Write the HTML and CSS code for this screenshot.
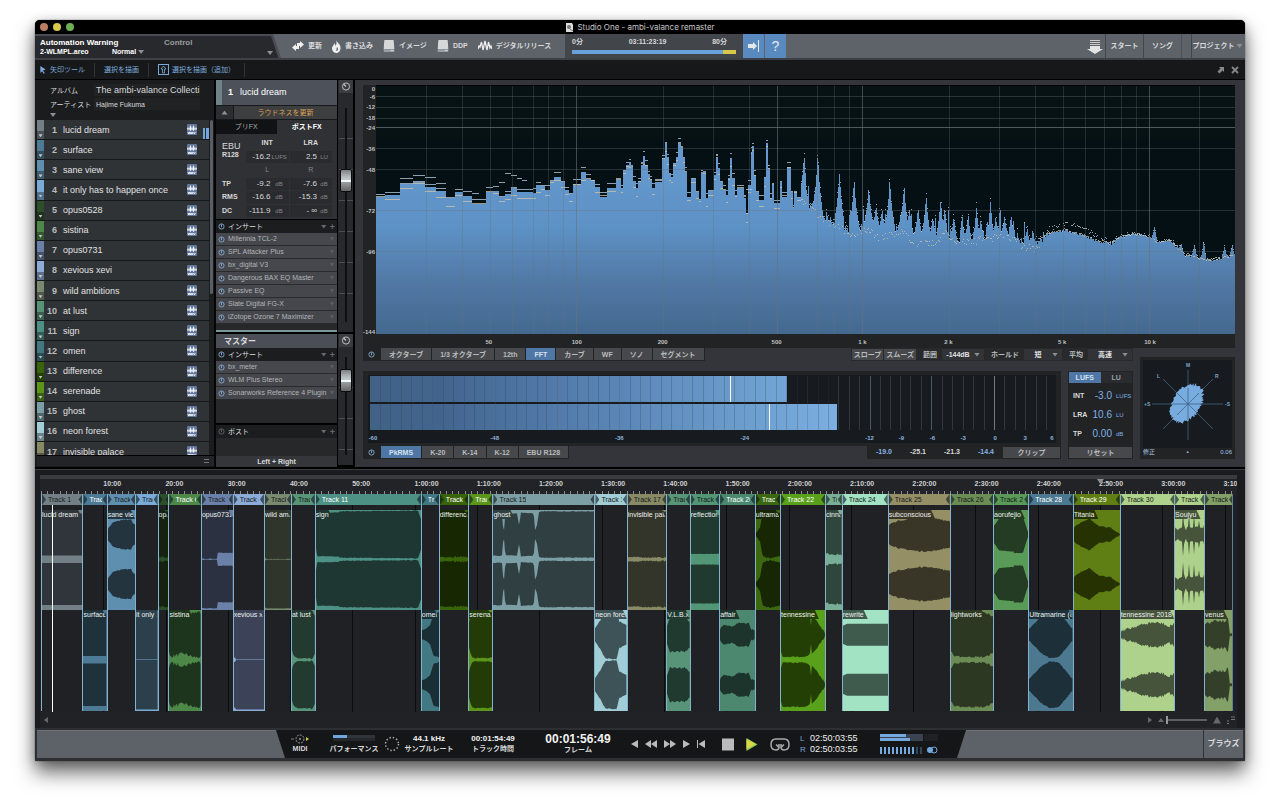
FILE: index.html
```html
<!DOCTYPE html>
<html lang="ja">
<head>
<meta charset="utf-8">
<title>Studio One - ambi-valance remaster</title>
<link rel="stylesheet" href="styles.css">
</head>
<body>
<svg class="defs" aria-hidden="true">
  <symbol id="power" viewBox="0 0 10 10"><circle cx="5" cy="5" r="3.7" fill="none" stroke="currentColor" stroke-width="1.3"/><path d="M5 2v4" stroke="currentColor" stroke-width="1.3"/></symbol>
  <symbol id="knob" viewBox="0 0 10 10"><circle cx="5" cy="5" r="4" fill="none" stroke="currentColor" stroke-width="1"/><path d="M5 5L2.500 2.500" stroke="currentColor" stroke-width="1.200"/></symbol>
  <symbol id="disk" viewBox="0 0 12 13"><path d="M1 0h10l1 10H0z" fill="#d5d7d8"/><path d="M0 10h12v3H0z" fill="#9a9da1"/><path d="M8 11h3v1H8z" fill="#eee"/></symbol>
  <symbol id="wav" viewBox="0 0 10 11"><rect width="10" height="11" rx="1" fill="#62779b"/><path d="M0 5l1-2 1 2 1.500-4L5 5l1.500-4L8 5l1-2 1 2-1 1-1-1-1.500 2L5 5 3.500 7 2 5 1 6z" fill="#f2f5fa"/><path d="M1 8l.7 2 .8-2 .7 2 .6-2M4.300 10L5 8l.8 2M6.500 8l.9 2 .9-2" fill="none" stroke="#fff" stroke-width=".8"/></symbol>
</svg>
<div class="window">
  <header class="titlebar">
    <span class="lights"><i></i><i></i><i></i></span>
    <svg class="doc-icon" viewBox="0 0 9 9"><path d="M1 0h6l1 2v7H1z" fill="#ddd"/><circle cx="4" cy="4" r="2" fill="#777"/><path d="M5 6l3 2" stroke="#777"/></svg>
    <span>Studio One - ambi-valance remaster</span>
  </header>

  <div class="toolbar">
    <div class="param-wrap"><div class="param">
      <div class="param-main"><b>Automation Warning</b><span><b>2-WLMPL.areo</b><b class="normal">Normal <i class="tri"></i></b></span></div>
      <div class="param-side"><span>Control</span><i class="tri"></i></div>
    </div></div>
    <nav class="actions">
      <button><svg class="i12" viewBox="0 0 12 12"><path d="M5 3h3V1l4 3.500L8 8V6H5z" fill="#eee"/><path d="M7 6H4V4L0 7.500 4 11V9h3z" fill="#eee"/></svg>更新</button>
      <button><svg class="flame" viewBox="0 0 9 13"><path d="M4 0c1 3 5 4 4.500 8.500C8 12 6 13 4.500 13 2 13 0 11 0 8.500 0 6 2 6 2 3c1 1 1.500 2 1.500 3C5 4 4.500 2 4 0z" fill="#eee"/><path d="M5 7c2 2 1 4-1 4 1-1 0-2 1-4z" fill="#667"/></svg>書き込み</button>
      <button><svg class="i12" viewBox="0 0 12 13"><use href="#disk"/></svg>イメージ</button>
      <button><svg class="i12" viewBox="0 0 12 13"><use href="#disk"/></svg>DDP</button>
      <button><svg class="i14" viewBox="0 0 14 12"><path d="M0 9l1-3 1 1L3.500 2l1.500 8L7 1l2 9 1.500-8L12 8l1-2 1 3" fill="none" stroke="#eee" stroke-width="1.300"/></svg>デジタルリリース</button>
    </nav>
    <div class="capacity">
      <div class="cap-text"><span>0分</span><span>03:11:23:19</span><span>80分</span></div>
      <div class="cap-bar"><i></i></div>
    </div>
    <button class="blue" aria-label="自動スクロール"><svg class="i12" viewBox="0 0 12 12"><path d="M0 4h5V2l4 4-4 4V8H0z" fill="#e6e8e8"/><path d="M10.500 0v12" stroke="#e6e8e8"/></svg></button>
    <button class="blue help" aria-label="ヘルプ">?</button>
    <nav class="pages">
      <svg class="down" viewBox="0 0 16 15"><path d="M3 1.500h10M3 3.500h10M3 5.500h10" stroke="#c9cbcc"/><path d="M3 7h10v3h3l-8 5-8-5h3z" fill="#e3e5e4"/></svg>
      <button>スタート</button><button>ソング</button><i class="spacer"></i><button class="project">プロジェクト<i class="tri"></i></button>
    </nav>
  </div>

  <div class="toolbar2">
    <button class="tool"><svg class="i8" viewBox="0 0 8 9"><path d="M1 0l6 4-3 1 2 3-1 1-2-3-2 2z" fill="#78a8d8"/></svg>矢印ツール</button>
    <button class="tool">選択を描画</button>
    <button class="tool"><svg class="i11" viewBox="0 0 11 11"><rect x=".5" y=".5" width="10" height="10" fill="none" stroke="#78a8d8"/><path d="M5.500 2L8 5H6.500v4h-2V5H3z" fill="none" stroke="#78a8d8" stroke-width=".8"/></svg>選択を描画（追加）</button>
    <span class="grow"></span>
    <button aria-label="切り離す"><svg class="i8" viewBox="0 0 8 8"><path d="M2 1h5v5L5.500 4.500 2.500 7.500.5 5.500l3-3z" fill="#888"/></svg></button>
    <button aria-label="閉じる"><svg class="i8" viewBox="0 0 8 8"><path d="M1 1l6 6M7 1L1 7" stroke="#888" stroke-width="1.800"/></svg></button>
  </div>

  <main class="main">
    <section class="album">
      <div class="meta">
        <label for="album">アルバム</label><input id="album" class="big" value="The ambi-valance Collecti">
        <label for="artist">アーティスト</label><input id="artist" value="Hajime Fukuma">
        <i class="tri"></i>
      </div>
      <div class="list-view"><ol class="tracks" id="tracks"></ol><i class="scroll"></i></div>
      <div class="list-foot"><i></i></div>
    </section>

    <section class="inspector">
      <div class="strip-top">
        <h2 class="song"><b>1</b>lucid dream</h2>
        <div class="update"><button aria-label="折りたたむ"><i class="tri up"></i></button><button class="update-btn">ラウドネスを更新</button></div>
        <div class="tabs"><button>プリFX</button><button class="on">ポストFX</button></div>
        <table class="loud">
          <tr><th rowspan="2" class="ebu">EBU<br><small>R128</small></th><th>INT</th><th>LRA</th></tr>
          <tr><td>-16.2<small>LUFS</small></td><td>2.5<small>LU</small></td></tr>
          <tr class="lr"><th></th><th>L</th><th>R</th></tr>
          <tr><th>TP</th><td>-9.2<small>dB</small></td><td>-7.6<small>dB</small></td></tr>
          <tr><th>RMS</th><td>-16.6<small>dB</small></td><td>-15.3<small>dB</small></td></tr>
          <tr><th>DC</th><td>-111.9<small>dB</small></td><td>- ∞<small>dB</small></td></tr>
        </table>
        <div class="ins-head"><svg class="pw"><use href="#power"/></svg>インサート<span class="grow"></span><i class="tri"></i><b>+</b></div>
        <ul class="fx">
          <li><svg class="pw"><use href="#power"/></svg>Millennia TCL-2<i class="tri"></i></li>
          <li><svg class="pw"><use href="#power"/></svg>SPL Attacker Plus<i class="tri"></i></li>
          <li><svg class="pw"><use href="#power"/></svg>bx_digital V3<i class="tri"></i></li>
          <li><svg class="pw"><use href="#power"/></svg>Dangerous BAX EQ Master<i class="tri"></i></li>
          <li><svg class="pw"><use href="#power"/></svg>Passive EQ<i class="tri"></i></li>
          <li><svg class="pw"><use href="#power"/></svg>Slate Digital FG-X<i class="tri"></i></li>
          <li><svg class="pw"><use href="#power"/></svg>iZotope Ozone 7 Maximizer<i class="tri"></i></li>
        </ul>
        <div class="colour-line"></div>
      </div>
      <div class="fader first"><svg class="kn"><use href="#knob"/></svg><div class="rail"><i class="cap"></i></div></div>

      <div class="strip-master">
        <h2 class="master">マスター</h2>
        <div class="ins-head"><svg class="pw"><use href="#power"/></svg>インサート<span class="grow"></span><i class="tri"></i><b>+</b></div>
        <ul class="fx">
          <li><svg class="pw"><use href="#power"/></svg>bx_meter<i class="tri"></i></li>
          <li><svg class="pw"><use href="#power"/></svg>WLM Plus Stereo<i class="tri"></i></li>
          <li><svg class="pw"><use href="#power"/></svg>Sonarworks Reference 4 Plugin<i class="tri"></i></li>
        </ul>
        <div class="empty"></div>
        <div class="ins-head post"><svg class="pw"><use href="#power"/></svg>ポスト<span class="grow"></span><i class="tri"></i><b>+</b></div>
        <div class="out">Left + Right</div>
      </div>
      <div class="fader second"><svg class="kn"><use href="#knob"/></svg><div class="rail"><i class="cap"></i></div></div>
    </section>

    <section class="analysis">
      <div class="spectrum">
        <div class="db-axis" id="dbAxis"></div>
        <svg class="plot" id="plot" viewBox="0 0 860 249" preserveAspectRatio="none"></svg>
        <div class="hz-axis" id="hzAxis"></div>
      </div>
      <div class="lower">
        <div class="lower-left">
          <div class="controls">
            <div class="bank"><svg class="pw"><use href="#power"/></svg><button>オクターブ</button><button>1/3 オクターブ</button><button>12th</button><button class="on">FFT</button><button>カーブ</button><button>WF</button><button>ソノ</button><button>セグメント</button></div>
            <span class="grow"></span>
            <div class="options">
              <button>スロープ</button><button>スムーズ</button>
              <label for="range">範囲</label><span class="sel w42"><select id="range"><option>-144dB</option></select><i class="tri"></i></span>
              <label for="hold">ホールド</label><span class="sel w38"><select id="hold"><option>短</option></select><i class="tri"></i></span>
              <label for="avg">平均</label><span class="sel w44"><select id="avg"><option>高速</option></select><i class="tri"></i></span>
            </div>
          </div>
          <div class="meters">
            <div class="level">
              <div class="level-view"><svg id="level" viewBox="0 0 690 56" preserveAspectRatio="none"></svg><div class="level-axis" id="levelAxis"></div></div>
              <div class="level-foot">
                <div class="bank low"><svg class="pw"><use href="#power"/></svg><button class="on">PkRMS</button><button>K-20</button><button>K-14</button><button>K-12</button><button>EBU R128</button></div>
                <span class="gap"></span>
                <div class="peaks"><b class="b">-19.0</b><b>-25.1</b><b>-21.3</b><b class="b">-14.4</b><button>クリップ</button></div>
              </div>
            </div>
            <div class="lufs">
              <div class="lufs-tabs"><button class="on">LUFS</button><button>LU</button></div>
              <dl><dt>INT</dt><dd>-3.0</dd><dd class="u">LUFS</dd><dt>LRA</dt><dd>10.6</dd><dd class="u">LU</dd><dt>TP</dt><dd>0.00</dd><dd class="u">dB</dd></dl>
              <button class="reset">リセット</button>
            </div>
          </div>
        </div>
        <div class="phase">
          <svg id="phase" viewBox="0 0 89 88"></svg>
          <div class="phase-foot"><span>修正</span><span>▪</span><span>0.06</span></div>
        </div>
      </div>
    </section>
  </main>

  <section class="arrange">
    <div class="arrange-inner">
      <div class="ruler-top"></div>
      <div class="ruler" id="ruler"></div>
      <div class="lanes" id="lanes"></div>
      <div class="scrollbar"><i class="tri left"></i><span class="grow"></span><i class="tri right"></i><i class="tri up"></i><input type="range" min="0" max="100" value="0" aria-label="ズーム"><i class="tri up large"></i><svg class="i8" viewBox="0 0 8 8"><path d="M4 1h4M4 3.500h4M0 5h2M0 7.500h2" stroke="#777"/></svg></div>
    </div>
  </section>

  <footer class="transport">
    <div class="deck-wrap"><div class="deck">
      <div class="cell midi"><svg class="midi-i" viewBox="0 0 18 10"><circle cx="9" cy="5" r="4" fill="none" stroke="#999" stroke-dasharray="2 1"/><circle cx="9" cy="5" r="1" fill="#999"/><path d="M0 5h3" stroke="#777"/><path d="M15 3l3 2-3 2z" fill="#d5c640"/></svg><span>MIDI</span></div>
      <div class="cell perf"><span class="perf-bar"><i></i></span><span>パフォーマンス</span></div>
      <svg class="ring" viewBox="0 0 16 16"><circle cx="8" cy="8" r="6.500" fill="none" stroke="#aaa" stroke-width="1.500" stroke-dasharray="1.500 1.900"/></svg>
      <div class="cell rate"><b>44.1 kHz</b><span>サンプルレート</span></div>
      <div class="cell time"><b>00:01:54:49</b><span>トラック時間</span></div>
      <div class="cell frame"><b>00:01:56:49</b><span>フレーム</span></div>
      <div class="buttons">
        <button aria-label="前へ"><svg class="n7" viewBox="0 0 7 8"><path d="M7 0v8L0 4z"/></svg></button>
        <button aria-label="巻き戻し"><svg class="n12" viewBox="0 0 12 8"><path d="M6 0v8L0 4zM12 0v8L6 4z"/></svg></button>
        <button aria-label="早送り"><svg class="n12" viewBox="0 0 12 8"><path d="M0 0v8l6-4zM6 0v8l6-4z"/></svg></button>
        <button aria-label="次へ"><svg class="n7" viewBox="0 0 7 8"><path d="M0 0v8l7-4z"/></svg></button>
        <button class="rtz" aria-label="先頭へ"><svg class="n8" viewBox="0 0 8 8"><path d="M0 0h1v8H0zM8 0v8L1.500 4z"/></svg></button>
        <button class="stop" aria-label="停止"><svg class="n12s" viewBox="0 0 12 12"><path d="M0 0h12v12H0z"/></svg></button>
        <button class="play" aria-label="再生"><svg class="n12s" viewBox="0 0 12 14"><path d="M0 0l12 7-12 7z" fill="#8fc65a"/><path d="M0 1l10 5.500L0 12z" fill="#d9d648"/></svg></button>
        <button aria-label="ループ"><svg class="n20" viewBox="0 0 20 13"><path d="M9 6V9q0 3-3 3Q1 12 1 6.500T6 1h8q5 0 5 5.500T14 12q-3 0-3-3V6M11.500 9L14 6.500M8.500 9L6 6.500" fill="none" stroke="#aaa" stroke-width="1.500"/></svg></button>
      </div>
      <div class="loc"><span><em>L</em>02:50:03:55</span><span><em>R</em>02:50:03:55</span></div>
      <svg class="out-meter" viewBox="0 0 58 20"><rect width="43" height="7" fill="#3b4350"/><rect width="26" height="3" fill="#73a9de"/><rect y="4" width="30" height="3" fill="#73a9de"/><rect x="44" width="14" height="7" fill="#1f2124"/><path d="M1 13v7M5 13v7M9 13v7M13 13v7M17 13v7M21 13v7M25 13v7M29 13v7M33 13v7" stroke="#73a9de" stroke-width="2"/><path d="M37 13v7M41 13v7" stroke="#33475c" stroke-width="2"/><circle cx="50" cy="16" r="3" fill="#73a9de"/><circle cx="54" cy="16" r="3" fill="none" stroke="#73a9de"/></svg>
    </div></div>
    <span class="grow"></span>
    <button class="browse">ブラウズ</button>
  </footer>
</div>
<script src="app.js"></script>
</body>
</html>
```
FILE: styles.css
```css
* { box-sizing: border-box; }
body {
  margin: 0;
  padding: 20px 35px 50px;
  background: #fff;
  font: 7px/10px "Liberation Sans", "Noto Sans CJK JP", sans-serif;
  color: #d8d9da;
}
button, input, select { font: inherit; color: inherit; background: none; border: 0; padding: 0; margin: 0; border-radius: 0; }
button { white-space: nowrap; }
svg { display: block; flex: none; }
h2, ul, ol, dl, dd { margin: 0; padding: 0; list-style: none; font-weight: normal; }
i { font-style: normal; }
.defs { position: absolute; width: 0; height: 0; }
.grow { flex: 1; }
.tri { display: inline-block; flex: none; width: 6px; height: 4px; background: #8d8f92; clip-path: polygon(0 0, 100% 0, 50% 100%); }
.tri.up { clip-path: polygon(50% 0, 100% 100%, 0 100%); }
.tri.left { width: 4px; height: 6px; clip-path: polygon(100% 0, 100% 100%, 0 50%); }
.tri.right { width: 4px; height: 6px; clip-path: polygon(0 0, 100% 50%, 0 100%); }
.i8 { width: 8px; height: 8px; }
.i11 { width: 11px; height: 11px; }
.i12 { width: 12px; height: 12px; }
.i14 { width: 14px; height: 12px; }

.window { background: #101113; border-radius: 5px 5px 1px 1px; overflow: clip; box-shadow: 0 0 1px #000, 0 12px 20px rgba(0,0,0,.55), 0 3px 12px rgba(0,0,0,.25); }
.titlebar { display: grid; grid-template-columns: 1fr auto auto 1fr; gap: 3px; align-items: center; height: 14px; background: #000; font: 8px/14px Inter, "Liberation Sans", sans-serif; color: #c6c6c6; }
.doc-icon { width: 9px; height: 9px; }
.lights { display: flex; gap: 5px; padding-left: 5px; }
.lights i { width: 8px; height: 8px; border-radius: 50%; background: #b97d62; }
.lights i:nth-child(2) { background: #d9c94f; }
.lights i:nth-child(3) { background: #6eae52; }

.toolbar { display: flex; height: 26px; background: #5e6269; border-bottom: 2px solid #3d4147; }
.param-wrap { background: #494c52; clip-path: polygon(0 0, 238px 0, 100% 100%, 0 100%); }
.param { display: flex; justify-content: space-between; width: 246px; height: 24px; padding: 2px 4px 0 5px; margin-top: 2px; background: #27292c; clip-path: polygon(0 0, 236px 0, 244px 100%, 0 100%); }
.param-main { display: flex; flex-direction: column; width: 124px; font-size: 8px; line-height: 9px; color: #fff; }
.param-main span { display: flex; font-size: 7px; justify-content: space-between; }
.normal { width: 52px; }
.param-side { display: flex; flex: 1; justify-content: space-between; padding-right: 4px; font-size: 8px; line-height: 9px; color: #9b9da0; font-weight: bold; }
.param-side .tri { align-self: flex-end; margin: 0 0 5px; }
.actions { display: flex; flex: none; align-items: center; gap: 10px; width: 284px; padding-left: 11px; }
.actions button { display: flex; align-items: center; gap: 4px; font-weight: bold; }
.flame { width: 9px; height: 13px; }
.capacity { flex: 0 0 178px; padding: 3px 7px 0; background: #42454a; font-weight: bold; }
.cap-text { display: flex; justify-content: space-between; padding-right: 9px; }
.cap-bar { height: 4px; margin-top: 3px; background: linear-gradient(90deg, #68a1db 92%, #d7c84a 92%); }
.blue { display: grid; place-items: center; flex: 0 0 21px; margin-right: 1px; background: #588ac0; }
.help { font: 14px/20px "Liberation Sans", sans-serif; color: #e5e8ea; }
.pages { display: flex; flex: 1; justify-content: flex-end; align-items: center; font-weight: bold; }
.pages button { align-self: stretch; width: 38px; border-left: 1px solid #43464b; }
.pages .spacer { align-self: stretch; width: 10px; border-left: 1px solid #4b4e54; }
.pages .project { width: 54px; padding-right: 2px; }
.project .tri { margin-left: 2px; }
.down { width: 16px; height: 15px; margin-right: 2px; }

.toolbar2 { display: flex; align-items: center; height: 20px; padding: 0 6px 0 3px; background: #17181a; border-bottom: 1px solid #000; color: #7bacdc; }
.tool { display: flex; align-items: center; gap: 3px; height: 14px; padding: 0 9px; border-right: 1px solid #313335; }
.tool:first-child { padding-left: 1px; }
.toolbar2 .grow + button { margin-right: 6px; }

.main { display: grid; grid-template-columns: 181px 138px minmax(0, 1fr); min-height: 386px; border-bottom: 2px solid #000; background: #0b0c0d; }

.album { display: flex; flex-direction: column; padding-left: 2px; background: #1b1c1e; border-right: 2px solid #050505; }
.meta { display: grid; grid-template-columns: 44px 106px; column-gap: 0; row-gap: 1px; height: 40px; padding: 4px 0 0 13px; align-content: start; }
.meta label { height: 13px; line-height: 13px; color: #ddd; }
.meta input { width: 100%; height: 12px; background: #202224; font-size: 7px; padding-left: 2px; }
.meta .big { font-size: 9px; }
.meta .tri { height: 4px; margin-top: 1px; }
.list-view { display: flex; flex: none; height: 335px; overflow: hidden; }
.tracks { flex: 1; height: 342px; display: flex; flex-direction: column; }
.tracks li { flex: 1; display: grid; grid-template-columns: 7px 14px 1fr 12px 10px; align-items: center; background: #303336; border-bottom: 1px solid #17181a; font-size: 9px; color: #e0e1e2; }
.tracks b { text-align: right; padding-right: 1px; color: #b9bbbd; }
.tracks span { padding-left: 5px; white-space: nowrap; }
.chip { display: flex; align-self: stretch; align-items: flex-end; justify-content: center; padding-bottom: 2px; background-image: linear-gradient(transparent 60%, rgba(0,0,0,.35) 60%); }
.chip .tri { width: 4px; height: 3px; background: #c5c8c9; }
.wav { width: 10px; height: 11px; }
.play-meter { align-self: end; justify-self: end; width: 6px; height: 11px; background: linear-gradient(90deg, #70a6dd 40%, #26292c 40% 55%, #70a6dd 55%); }
.scroll { width: 3px; height: 174px; margin: 0 1px; background: #5a5d64; border-radius: 2px; }
.list-foot { display: flex; justify-content: flex-end; align-items: center; height: 11px; padding-right: 5px; border-top: 1px solid #000; background: #222427; }
.list-foot i { width: 5px; height: 4px; border: solid #777; border-width: 1px 0; }

.inspector { display: grid; grid-template-columns: 121px 16px; grid-template-rows: auto 1fr; column-gap: 0; background: #000; align-content: start; }
.strip-top { background: #26282a; border-bottom: 2px solid #000; }
.song { display: flex; height: 25px; line-height: 25px; gap: 7px; padding-left: 6px; border-left: 6px solid #6f8388; background: #4d515a; font-size: 9px; color: #fff; }
.update { display: grid; grid-template-columns: 17px 1fr; gap: 1px; height: 15px; padding: 1px 0; background: #17181a; }
.update button { background: #2c2e31; display: grid; place-items: center; }
.update .update-btn { background: #3c3e40; color: #dca052; }
.tabs { display: grid; grid-template-columns: 1fr 1fr; height: 14px; }
.tabs button { background: #111214; color: #a6a8aa; font-size: 7px; }
.tabs .on { background: #2f3135; color: #fff; font-weight: bold; }
.loud { width: 100%; height: 86px; padding: 2px 4px 1px 5px; border-spacing: 1px; table-layout: fixed; background: #2f3135; border-bottom: 1px solid #000; }
.loud tr { height: 12px; }
.loud th, .loud td { padding: 0; font-size: 7px; line-height: 10px; }
.loud th:first-child { width: 23px; text-align: left; }
.loud .ebu { font-size: 9px; font-weight: normal; vertical-align: middle; line-height: 8px; }
.loud .ebu small { font-size: 7px; font-weight: bold; }
.loud td { background: #292b2f; font-size: 8px; text-align: right; white-space: nowrap; padding-right: 2px; }
.loud td small { display: inline-block; width: 15px; margin-left: 1px; font-size: 6px; color: #85878a; text-align: center; }
.loud td:last-child small { width: 12px; }
.loud .lr th { color: #85878a; font-weight: normal; }
.ins-head { display: flex; align-items: center; gap: 3px; height: 13px; padding: 0 2px; background: #1c1d1f; color: #ddd; }
.ins-head .tri { background: #66686b; }
.ins-head b { color: #66686b; font-size: 9px; }
.pw { width: 7px; height: 7px; color: #86abd0; }
.fx li { display: flex; align-items: center; gap: 3px; height: 13px; padding: 0 3px 0 2px; background: #45474c; border-bottom: 1px solid #292b2d; color: #b3b5b8; }
.fx .tri { margin-left: auto; width: 4px; background: #5b5e63; }
.colour-line { height: 2px; margin-top: 6px; background: #7c979c; }
.master { height: 14px; padding-left: 8px; background: #4b4e56; font: bold 8px/14px "Noto Sans CJK JP", sans-serif; }
.strip-master { display: flex; flex-direction: column; background: #26282a; }
.strip-master .empty { height: 25px; border-bottom: 2px solid #000; }
.post .pw { color: #66686b; }
.out { margin-top: auto; height: 11px; line-height: 11px; background: #34363a; text-align: center; font-weight: bold; }
.fader { display: flex; flex-direction: column; align-items: center; width: 16px; background: #28292c; border-left: 1px solid #000; border-bottom: 2px solid #000; }
.fader .kn { width: 14px; height: 13px; padding: 2px; background: #3a3c3f; color: #ccc; }
.rail { flex: 1; width: 14px; margin: 15px 0 10px; background: linear-gradient(90deg, transparent 6px, #0e0f10 6px 8px, transparent 8px), repeating-linear-gradient(transparent 0 30px, #4c4e51 30px 31px); }
.rail .cap { display: block; width: 12px; height: 23px; margin: 0 auto; border: 1px solid #0c0c0c; border-radius: 2px; background: linear-gradient(#7d8080, #b2b6b7 30%, #c6ccce 48%, #f2fbff 49% 55%, #9ca1a3 56%, #666); }
.first .cap { transform: translateY(61px); }
.second .rail { margin-top: 10px; }
.second .cap { transform: translateY(12px); }

.analysis { display: flex; flex-direction: column; padding: 5px 10px 8px 8px; background: #34353a; border-left: 1px solid #000; }
.spectrum { display: grid; grid-template-columns: 13px minmax(0, 1fr); grid-template-rows: 250px 13px; background: #222325; }
.plot { width: 100%; height: 249px; background: #071215; border-top: 1px solid #000; }
.db-axis, .hz-axis, .level-axis { position: relative; font-weight: bold; color: #bfc1c2; font-size: 6px; line-height: 8px; }
.hz-axis { grid-column: 2; }
.db-axis span { position: absolute; right: 1px; transform: translateY(-50%); }
.hz-axis span, .level-axis span { position: absolute; top: 3px; transform: translateX(-50%); }
.lower { display: grid; grid-template-columns: minmax(0, 1fr) 95px; gap: 7px; }
.lower-left { display: flex; flex-direction: column; gap: 10px; }
.controls { display: flex; height: 13px; }
.bank { display: flex; gap: 1px; height: 13px; padding: 0 1px 1px 0; background: #222325; }
.bank .pw { margin: 3px 5px 0 5px; }
.bank button, .options > button, .peaks button, .reset { padding: 0 8px; background: #46484b; line-height: 11px; color: #b9bbbd; font-weight: bold; }
.bank .on, .lufs .on { background: #4f77a5; color: #d3e2f3; }
.options { display: flex; gap: 1px; height: 13px; padding: 1px 1px 1px; background: #28292b; font-weight: bold; color: #b9bbbd; }
.options > button { padding: 0 2px; }
.options label { padding: 0 4px 0 6px; line-height: 11px; }
.sel { display: flex; align-items: center; background: #313336; }
.sel select { flex: 1; min-width: 0; appearance: none; text-align: center; color: #e0e1e2; font-weight: bold; line-height: 11px; }
.sel .tri { margin-right: 4px; }
.w42 { width: 42px; } .w38 { width: 38px; } .w44 { width: 44px; }
.meters { display: grid; grid-template-columns: minmax(0, 1fr) 65px; gap: 7px; flex: 1; }
.level { display: flex; flex-direction: column; background: #222325; }
.level-view { margin: 4px 5px 3px; padding: 1px 0; background: #171a1f; }
.level-view > svg { width: 100%; height: 55px; }
.level-axis { height: 11px; color: #8fb4da; }
.level-foot { display: flex; background: #34353a; }
.low { height: 13px; }
.gap { flex: 1; }
.peaks { display: grid; grid-template-columns: repeat(4, 34px) 57px; align-items: center; height: 13px; padding: 0 1px 1px 0; background: #222325; text-align: center; }
.peaks .b { color: #86b5e4; }
.lufs { display: flex; flex-direction: column; padding: 1px; background: #222325; }
.lufs-tabs { display: grid; grid-template-columns: 1fr 1fr; height: 11px; }
.lufs-tabs button { background: #2a2b2e; color: #9b9da0; font-weight: bold; line-height: 11px; }
.lufs dl { display: grid; flex: 1; grid-template-columns: 16px 22px 1fr; align-items: center; padding: 4px 0 4px 4px; column-gap: 1px; }
.lufs dt { font-weight: bold; }
.lufs dd { text-align: right; font-size: 10px; color: #7fb2e8; }
.lufs .u { text-align: left; font-size: 6px; padding-left: 3px; }
.reset { height: 11px; }
.phase { margin-top: 9px; padding: 3px 3px 1px; background: #222325; }
.phase svg { width: 100%; height: 88px; background: #171a1f; }
.phase text { font: bold 5px "Liberation Sans", sans-serif; fill: #7aa6d2; }
.phase-foot { display: flex; justify-content: space-between; font-size: 6px; line-height: 9px; color: #a9c6e2; }

.arrange { padding: 2px 8px 0 5px; border-top: 1px solid #3c3d41; background: #1b1c1f; }
.arrange-inner { position: relative; }
.ruler-top { height: 4px; margin-top: 3px; background: #3a3b3f; }
.ruler { display: flex; overflow: hidden; height: 15px; padding-left: 1px; background: repeating-linear-gradient(90deg, #8b8d8f 0 1px, transparent 1px .5204%) 1px 12px / 100% 3px no-repeat, #222326; font-weight: bold; color: #d0d1d2; line-height: 9px; }
.ruler span { flex: 0 0 5.204%; white-space: nowrap; }
.marker { position: absolute; top: 4px; left: 88.3%; width: 7px; height: 5px; }
.lanes { position: relative; display: grid; grid-template-rows: 11px 5px 100px 101px; padding: 0 4px 1px 1px; background: repeating-linear-gradient(90deg, #0b0c0e 0 1px, transparent 1px 5.204%) 1px 11px no-repeat, #202124; }
.head { display: flex; align-items: center; overflow: hidden; position: relative; grid-row: 1; padding: 0 5px 0 7px; font-weight: bold; line-height: 11px; color: #16191b; }
.head span { overflow: hidden; white-space: nowrap; font-weight: normal; }
.head.light { color: #fff; }
.head::before, .head::after { content: ""; position: absolute; top: 0; left: 1px; width: 4px; height: 11px; background: rgba(10,20,24,.6); clip-path: polygon(0 0, 100% 50%, 0 100%); }
.head::after { left: auto; right: 0; clip-path: polygon(100% 0, 0 50%, 100% 100%); }
.clip { position: relative; overflow: hidden; grid-row: 3; }
.clip.b { grid-row: 4; }
.clip svg { width: 100%; height: 100%; }
.clip span { position: absolute; top: 0; left: 0; max-width: 100%; height: 9px; padding: 0 4px 0 1px; line-height: 9px; overflow: hidden; white-space: nowrap; color: #eef0ee; clip-path: polygon(0 0, calc(100% - 4px) 0, 100% 100%, 0 100%); }
.edge { grid-row: 1 / 5; z-index: 1; border-left: 1px solid #83b2cf; }
.edge:last-of-type { border-right: 1px solid #5f7f97; }
.playhead { position: absolute; top: 11px; bottom: 0; left: 1%; width: 1px; background: #fff; z-index: 2; }
.scrollbar { display: flex; align-items: center; gap: 6px; height: 16px; padding: 0 2px 0 4px; background: #212225; }
.scrollbar .tri { background: #65676a; }
.scrollbar .large { width: 8px; height: 7px; }
.scrollbar input { appearance: none; width: 41px; height: 8px; margin-left: -4px; background: linear-gradient(transparent 3px, #5c5e61 3px 5px, transparent 5px); }
.scrollbar input::-webkit-slider-thumb { appearance: none; width: 2px; height: 8px; background: #96989a; }

.transport { display: flex; height: 33px; background: #5d6168; border: solid #2d2f33; border-width: 2px 2px 3px; box-shadow: inset 0 1px #6b6f76; }
.deck-wrap { margin-left: 239px; }
.deck { display: flex; align-items: center; width: 690px; height: 28px; padding-left: 11px; background: #151618; clip-path: polygon(0 0, 100% 0, 681px 100%, 9px 100%); }
.cell { display: flex; flex-direction: column; align-items: center; white-space: nowrap; line-height: 10px; font-weight: bold; flex: none; }
.cell b { font-size: 8px; color: #f2f2f2; }
.midi { width: 26px; }
.midi-i { width: 18px; height: 10px; }
.perf { width: 52px; margin-left: 15px; }
.perf-bar { width: 42px; height: 6px; margin-bottom: 3px; background: linear-gradient(#30343a 50%, #24272b 50%); }
.perf-bar i { display: block; width: 14px; height: 3px; background: #70a6dd; }
.ring { width: 16px; height: 16px; margin-left: 4px; }
.rate { width: 52px; margin-left: 3px; }
.time { width: 50px; margin-left: 13px; }
.frame { width: 70px; margin-left: 25px; }
.frame b { font-size: 12px; line-height: 11px; }
.buttons { display: flex; align-items: center; gap: 7px; margin-left: 18px; flex: none; }
.buttons svg { fill: #b9bbbc; }
.n7 { width: 7px; height: 8px; } .n8 { width: 8px; height: 8px; } .n12 { width: 12px; height: 8px; }
.n12s { width: 12px; height: 13px; } .n20 { width: 20px; height: 13px; }
.stop { margin-left: 10px; }
.play { margin-left: 5px; margin-right: 5px; }
.loc { display: flex; flex-direction: column; margin-left: 10px; font-size: 9px; color: #f0f0f0; }
.loc em { display: inline-block; width: 10px; font-style: normal; font-size: 8px; color: #78a4cf; }
.out-meter { width: 58px; height: 20px; margin-left: 22px; }
.browse { width: 40px; border-left: 1px solid #303236; font-size: 8px; font-weight: bold; }
```
FILE: app.js
```js
let seed = 7;
const rnd = () => (seed = (seed * 16807) % 2147483647) / 2147483647;
const $ = id => document.getElementById(id);

// start x, title, colour, wave colour, envelope [position, amplitude, ...], jitter, light label
const T = [
  [41, 'lucid dream', '#728086', '#2f353a', [0, .84, 1, .84], 0],
  [82.5, 'surface', '#4d7a94', '#1f313b', [0, .84, 1, .84], 0, 1],
  [106.7, 'sane view', '#5e8fae', '#23343f', [0, .2, .2, .5, .5, .6, .88, .62, .9, .45, 1, .45], .04],
  [135, 'it only has to happen once', '#78abd8', '#2b404b', [0, .98, 1, .98], 0],
  [157.6, 'opus0528', '#2c4f2a', '#14220f', [0, .95, 1, .95], .08],
  [168.5, 'sistina', '#4e8848', '#1e351d', [0, .5, .05, .93, .2, .9, .5, .82, .8, .96, 1, .96], .14, 1],
  [201, 'opus0731', '#6b80a9', '#2c3141', [0, .98, .52, .98, .53, .74, 1, .74], .02],
  [232.7, 'xevious xevi', '#8cabd9', '#3c4257', [0, .9, .08, .9, .09, .98, 1, .98], 0],
  [264, 'wild ambitions', '#798a70', '#30352b', [0, .85, .06, .98, 1, .98], .01],
  [291, 'at lust', '#579478', '#233a31', [0, .5, .1, .85, .3, .97, .9, .97, 1, .8], .05],
  [314.8, 'sign', '#4d9084', '#1f3733', [0, .3, .02, .88, .22, .9, .23, .94, .7, .96, .97, .97, 1, .6], .03, 1],
  [421, 'omen', '#417882', '#1a2f35', [0, .15, .5, .4, .7, .9, 1, .9], .06, 1],
  [439, 'difference', '#3a6409', '#172702', [0, .93, 1, .93], .07, 1],
  [468.5, 'serenade', '#5b961b', '#233b06', [0, .4, .15, .9, .3, .95, .85, .95, 1, .9], .04, 1],
  [492.6, 'ghost', '#7b9fa4', '#303f42', [0, .86, .1, .86, .11, .2, .12, .2, .13, .84, .25, .86, .26, .4, .27, .4, .28, .9, .41, .85, .42, .2, .44, .35, .46, .9, .5, .94, .97, .94, 1, .94], .03],
  [594.6, 'neon forest', '#a0cdd6', '#3d5358', [0, .25, .2, .6, .35, .98, .7, .98, .78, .55, 1, .4], .05],
  [627, 'invisible palace', '#878a65', '#34352a', [0, .93, 1, .95], .05],
  [666.4, 'V.L.B.x', '#579478', '#203a30', [0, .3, .15, .7, .8, .72, 1, .55], .08],
  [690, 'reflection', '#529775', '#203a30', [0, .78, 1, .78], .01],
  [719.4, 'affair', '#4c8870', '#1c342c', [0, .2, .1, .4, .4, .35, .5, .5, .85, .5, .9, .25, 1, .25], .07, 1],
  [755, 'ultramarine', '#3c6811', '#172703', [0, .05, .2, .3, .3, .9, .6, .97, 1, .9], .05, 1],
  [780.3, 'tennessine', '#5aa11b', '#243f05', [0, .5, .05, .9, .6, .9, .67, .75, .68, .1, .7, .8, .8, .6, 1, .1], .06, 1],
  [825.3, 'cinnamon', '#78ae96', '#2f463c', [0, .8, 1, .85], .08],
  [842, 'rewrite', '#a2e3c4', '#3f5b4e', [0, .35, .1, .44, 1, .44], .01],
  [888, 'subconscious', '#948f65', '#393628', [0, .4, .2, .6, .5, .7, .7, .7, 1, .55], .06],
  [950, 'lightworks', '#6c8c55', '#2c3821', [0, .6, .1, .9, .8, .92, 1, .75], .07],
  [993.4, 'aorufejio', '#5a9a58', '#233c23', [0, .3, .18, .65, .55, .7, .56, .65, .6, .75, .85, .75, .97, .2, 1, .1], .02],
  [1028.6, 'Ultramarine (c', '#4c7990', '#1d303a', [0, .2, .3, .75, .5, .95, .7, .9, 1, .25], .04, 1],
  [1073, 'Titania', '#5f7f15', '#273203', [0, .3, .2, .55, .35, .66, .55, .35, .8, .3, 1, .05], .05, 1],
  [1120, 'tennessine 2018', '#aed28c', '#45543a', [0, .2, .3, .4, .6, .55, .8, .5, .9, .35, 1, .55], .12],
  [1174.5, 'Soujyu', '#aed28c', '#45543a', [0, .3, .28, .3, .3, .95, .35, .3, .48, .35, .5, .95, .53, .4, .64, .4, .66, .95, .7, .35, .8, .4, .82, .9, .85, .35, 1, .4], .15],
  [1204.5, 'venus', '#82a067', '#343f2a', [0, .5, .4, .65, .7, .6, .85, .7, .88, .1, 1, .05], .14]
];
const END = 1233.4;

const envAt = (e, t) => {
  for (let i = 2; i < e.length; i += 2) {
    if (t <= e[i]) return e[i - 1] + (e[i + 1] - e[i - 1]) * (t - e[i - 2]) / (e[i] - e[i - 2] || 1);
  }
  return e[e.length - 1];
};
function wave(e, jit, n) {
  let d = '';
  const amps = [];
  for (let i = 0; i <= n; i++) amps.push(Math.max(.02, envAt(e, i / n) - rnd() * jit));
  for (const c of [24.5, 74]) {
    d += 'M0 ' + c;
    amps.forEach((a, i) => d += `L${(i / n * 100).toFixed(1)} ${(c - a * 25).toFixed(1)}`);
    for (let i = n; i >= 0; i--) d += `L${(i / n * 100).toFixed(1)} ${(c + amps[i] * 25).toFixed(1)}`;
    d += 'z';
  }
  return d;
}

$('tracks').innerHTML = T.slice(0, 17).map((t, i) =>
  `<li><i class="chip" style="background-color:${t[2]}"><i class="tri"></i></i><b>${i + 1}</b><span>${t[1]}</span><svg class="wav"><use href="#wav"/></svg>${i ? '' : '<i class="play-meter"></i>'}</li>`).join('');

const lanes = $('lanes');
lanes.style.gridTemplateColumns = T.map((t, i) => `minmax(0,${((T[i + 1] || [END])[0] - t[0]).toFixed(1)}fr)`).join(' ');
lanes.innerHTML = T.map((t, i) => {
  const w = (T[i + 1] || [END])[0] - t[0], col = `grid-column:${i + 1}`;
  return `<div class="head${t[6] ? ' light' : ''}" style="${col};background:${t[2]}">${w > 12 ? `<span>Track ${i + 1}</span>` : ''}</div>` +
    `<div class="clip${i % 2 ? ' b' : ''}" style="${col};background:${t[2]}"><svg viewBox="0 0 100 100" preserveAspectRatio="none"><path d="${wave(t[4], t[5], Math.round(w))}" fill="${t[3]}"/></svg><span style="background:${t[3]}">${t[1]}</span></div>` +
    `<div class="edge" style="${col}"></div>`;
}).join('') + '<i class="playhead"></i>';

let r = '';
for (let i = 0; i < 20; i++) {
  const h = Math.floor(i / 6), m = (i % 6) * 10;
  r += `<span>${i === 0 ? '' : i === 19 ? '3:10' : h ? `${h}:${String(m).padStart(2, '0')}:00` : m + ':00'}</span>`;
}
$('ruler').innerHTML = r + '<i class="tri marker"></i>';

// Spectrum: [end x, y] steps for the low bands, then a base curve with narrow peaks
const steps = [72,367,117,361,156,328,192,322,224,335,255,348,282,370,306,352,332,362,375,387,397,352,415,347,432,366,450,358,467,340,515,350,526,355,540,330,553,334,567,345,580,317,600,306,612,320,624,345,636,358,662,328,675,292,690,312,702,318,717,335,740,365,765,340,780,316,787,340,797,288,805,270,812,262,818,275,825,318,833,340,840,318,847,270,854,242,862,270,868,298,874,312,882,338,905,320,912,250,918,203,924,245,930,296,938,305,946,268,952,245,960,204,967,220,973,250,980,290,990,365,1005,312,1015,350,1020,375,1027,295,1036,290,1042,370,1060,348,1066,300,1072,245,1078,280,1088,320,1095,345,1102,360,1107,310,1115,248,1122,310,1130,360,1150,340,1157,370,1163,418,1170,330,1175,230,1181,213,1187,300,1195,350,1210,375,1216,310,1222,205,1228,280,1235,370,1240,330,1258,385,1265,320,1280,365,1290,275,1297,350,1300,400,1310,350,1320,370];
const base = [0,370,30,390,70,430,120,450,150,470,200,455,240,480,300,460,340,495,410,500,430,465,470,490,520,490,600,475,640,480,665,505,705,510,740,480,795,468,850,485,890,500,930,510,955,490,1000,480,1050,490,1070,505,1110,500,1150,540,1225,560,1306,545];
const peaks = [8,250,52,250,117,298,161,320,205,345,227,400,245,412,268,322,311,340,327,408,353,405,377,370,397,435,421,380,433,410,460,435,485,430,503,425,528,398,541,440,570,380,586,435,612,430,632,428,680,465,697,475,1062,460,1142,510,1182,515,1210,505,1272,520,1295,515];
let d = 'M0 249', white = '', cream = '', x = 0;
for (let i = 0; i < steps.length; i += 2) {
  const nx = steps[i] / 3 - 15, y = Math.round(steps[i + 1] / 3 - 11);
  d += `L${x.toFixed(1)} ${y}L${nx.toFixed(1)} ${y}`;
  const w = (nx - x).toFixed(1);
  white += `M${x.toFixed(1)} ${y - Math.floor(rnd() * 3) * 2}h${w}`;
  cream += `M${x.toFixed(1)} ${y - 1 + Math.floor(rnd() * 11)}h${w}`;
  x = nx;
}
[[117,156,313],[156,192,304],[192,224,310],[224,255,328],[415,432,325],[432,450,298],[450,467,304],[467,483,313],[483,498,317],[333,353,358],[353,375,374],[1155,1175,345]].forEach(a => white += `M${a[0] / 3 - 15} ${Math.round(a[2] / 3 - 11)}h${(a[1] - a[0]) / 3}`);
for (let zx = 0; zx < 1306; zx += 3) {
  const b = envAt(base, zx);
  let y = b + (rnd() - .5) * (zx < 730 ? 30 : zx > 850 && zx < 960 ? 12 : 8);
  if (zx < 720 && rnd() < .16) y -= rnd() * 70;
  for (let k = 0; k < peaks.length; k += 2) {
    const q = Math.abs(zx - peaks[k]), wd = zx < 420 ? 15 : 8;
    if (q < wd) y = Math.min(y, peaks[k + 1] + (b - peaks[k + 1]) * Math.pow(Math.max(0, q - 1.5) / wd, .6));
  }
  const X = Math.round(zx / 3 + 425), Y = Math.round(y / 3 - 11);
  d += `L${X} ${Y}h1`;
  const lift = zx > 740 && zx < 920 ? Math.max(0, 7 - Math.round(Math.abs(zx - 830) / 25)) : 0;
  if (rnd() < .75) white += `M${X} ${Y - Math.floor(rnd() * (zx < 720 ? 6 : 3)) - lift}h1`;
  if (rnd() < .7) cream += `M${X} ${Math.round(b / 3 - 11 + (zx < 720 ? rnd() * 7 : -2 + rnd() * 2))}h1`;
}
d += 'L860 249z';
let grid = '';
[10, 21, 32, 41, 62, 83, 125, 166].forEach((y, i) => grid += `<path d="M0 ${y}.500H860" opacity="${i === 3 ? .75 : .35}"/>`);
[50,86,114,136,157,172,187,200,287,337,373,401].concat([52,103,148,187,446,598,706,788,855,913,964,1009,1048,1198].map(v => Math.round(v / 3 + 425)))
  .forEach(v => grid += `<path d="M${v}.500 0V249" opacity="${[200, 401, 487, 774].includes(v) ? .6 : .3}"/>`);
$('plot').innerHTML = `<defs><linearGradient id="sg" x1="0" y1="54" x2="0" y2="249" gradientUnits="userSpaceOnUse"><stop offset="0" stop-color="#689bd0"/><stop offset=".45" stop-color="#5e92c6"/><stop offset=".75" stop-color="#5077a3"/><stop offset="1" stop-color="#446990"/></linearGradient></defs>
<g shape-rendering="crispEdges"><path d="${d}" fill="url(#sg)"/><path d="${cream}" stroke="#d4c5a5" opacity=".75"/><path d="${white}" stroke="#b9d3e8" opacity=".75"/><g stroke="#697275">${grid}</g></g>`;

const marks = (id, list, prop, off, size) => $(id).innerHTML = list.map(a => `<span style="${prop}:${((a[1] - off) / size * 100).toFixed(2)}%">${a[0]}</span>`).join('');
marks('dbAxis', [['0', 89], ['-6', 97], ['-12', 107], ['-18', 118], ['-24', 128], ['-36', 149], ['-48', 170], ['-72', 211], ['-96', 252], ['-144', 332]], 'top', 85, 250);
marks('hzAxis', [['50', 488], ['100', 576], ['200', 662], ['500', 776], ['1 k', 862], ['2 k', 948], ['5 k', 1062], ['10 k', 1150]], 'left', 375, 860);
marks('levelAxis', [['-60', 372], ['-48', 494], ['-36', 619], ['-24', 745], ['-12', 870], ['-9', 902], ['-6', 933], ['-3', 964], ['0', 996], ['3', 1026], ['6', 1053]], 'left', 367, 690);

let ticks = '';
for (let db = -59; db <= 5; db++) {
  const X = Math.round(628 + db * 10.44);
  ticks += `<path d="M${X}.500 0V55" stroke="${db === 0 ? '#777b80' : db % 6 === 0 ? '#4d5968' : '#34383e'}" opacity="${X < 470 ? .25 : 1}"/>`;
}
$('level').innerHTML = `<defs><linearGradient id="lg" gradientUnits="userSpaceOnUse" x1="2" x2="470"><stop offset="0" stop-color="#416285"/><stop offset=".15" stop-color="#42658f"/><stop offset=".45" stop-color="#557faf"/><stop offset=".8" stop-color="#6b9dcd"/><stop offset="1" stop-color="#7caee2"/></linearGradient></defs>
<g shape-rendering="crispEdges"><rect x="2" width="418" height="26" fill="url(#lg)"/><rect x="2" y="28" width="468" height="27" fill="url(#lg)"/>${ticks}<path d="M363.500 0v26M402.500 28v27" stroke="#fff"/></g>`;

let blob = '';
for (let i = 0; i < 90; i++) {
  const a = i / 90 * Math.PI * 2, k = 1 + (rnd() - .5) * .2, p = Math.cos(a) * 21 * k, q = Math.sin(a) * 14 * k;
  blob += `${i ? 'L' : 'M'}${(43.5 + p * .55 + q * .83).toFixed(1)} ${(43.5 - p * .83 + q * .55).toFixed(1)}`;
}
$('phase').innerHTML = `<g stroke="#3a5468" stroke-width="1"><path d="M9 44H80M45 10V80M20 19L70 69M70 19L20 69"/></g><path d="${blob}z" fill="#78acdf"/><path d="M28 44H60M45 28V60M34 33L56 55M56 33L34 55" stroke="#3c6288" stroke-width=".8"/><text x="43" y="7">M</text><text x="14" y="18">L</text><text x="72" y="18">R</text><text x="1" y="46">+S</text><text x="82" y="46">-S</text>`;
```
